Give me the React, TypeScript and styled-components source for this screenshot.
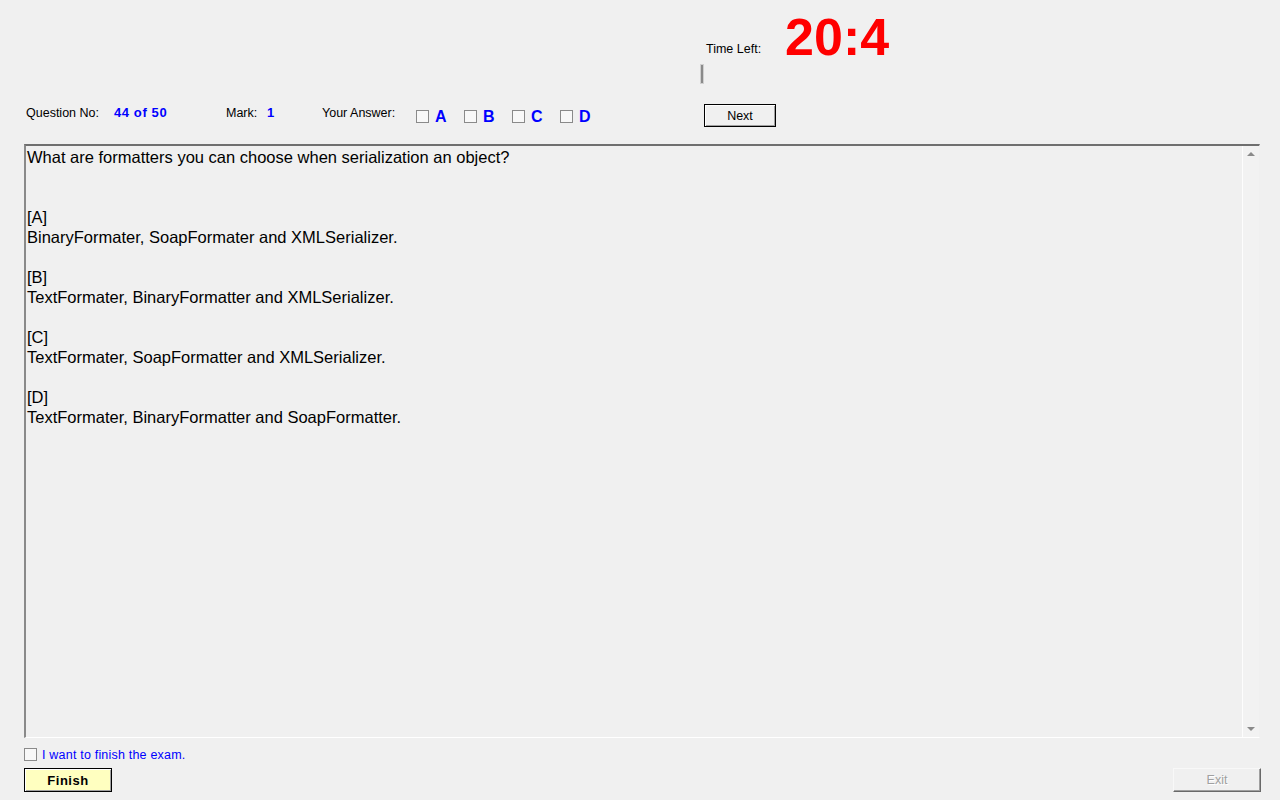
import styled, { createGlobalStyle } from 'styled-components'

const GlobalStyle = createGlobalStyle`
  html, body {
    margin: 0;
    padding: 0;
    background: #f0f0f0;
  }
  body {
    font-family: 'Liberation Sans', Arial, sans-serif;
    font-size: 12px;
    color: #000;
  }
`

const Page = styled.div`
  width: 1280px;
  height: 800px;
  display: flex;
  flex-direction: column;
  background: #f0f0f0;
  overflow: hidden;
`

const TimerArea = styled.div`
  display: flex;
  flex-direction: column;
  padding-left: 700px;
`

const TimerRow = styled.div`
  display: flex;
  align-items: flex-start;
  height: 64px;
  padding-left: 6px;
`

const TimeLabel = styled.span`
  margin-top: 42px;
  font-size: 12.5px;
  line-height: 14px;
`

const Clock = styled.span`
  margin-top: 11px;
  margin-left: 24px;
  font-size: 52px;
  line-height: 52px;
  font-weight: bold;
  color: #ff0000;
`

const Progress = styled.div`
  width: 2px;
  height: 18px;
  border: 1px solid #d0d0d0;
  background: #8a8a8a;
`

const InfoRow = styled.div`
  display: flex;
  align-items: center;
  height: 23px;
  margin-top: 20px;
  padding-left: 26px;
`

const Cell = styled.div<{ $w: number }>`
  width: ${(p) => p.$w}px;
  flex: none;
  display: flex;
  align-items: center;
  padding-bottom: 6px;
`

const Label = styled.span`
  font-size: 12.5px;
  line-height: 14px;
`

const Value = styled.span`
  font-size: 13px;
  line-height: 14px;
  font-weight: bold;
  letter-spacing: 0.6px;
  color: #0000ff;
`

const Option = styled.label`
  width: 48px;
  flex: none;
  display: flex;
  align-items: center;
  gap: 6px;
  padding-top: 2px;
`

const Box = styled.span`
  width: 11px;
  height: 11px;
  flex: none;
  border: 1px solid #8a8a8a;
  background: #f8f8f8;
`

const Letter = styled.span`
  font-size: 16px;
  line-height: 18px;
  font-weight: bold;
  color: #0000ff;
`

const Button = styled.button<{ $bg?: string; $bold?: boolean; $disabled?: boolean }>`
  width: 88px;
  height: 24px;
  padding: 0;
  box-sizing: border-box;
  font-family: 'Liberation Sans', Arial, sans-serif;
  font-size: ${(p) => (p.$bold ? '13px' : '12.5px')};
  letter-spacing: ${(p) => (p.$bold ? '0.5px' : '0')};
  font-weight: ${(p) => (p.$bold ? 'bold' : 'normal')};
  color: ${(p) => (p.$disabled ? '#a0a0a0' : '#000')};
  background: ${(p) => p.$bg || '#f0f0f0'};
  border: 1px solid ${(p) => (p.$disabled ? '#f8f8f8' : '#000')};
  border-right-color: ${(p) => (p.$disabled ? '#696969' : '#000')};
  border-bottom-color: ${(p) => (p.$disabled ? '#696969' : '#000')};
  box-shadow: ${(p) =>
    p.$disabled
      ? 'inset -1px -1px 0 #a0a0a0'
      : 'inset 1px 1px 0 #fff, inset -1px -1px 0 #a0a0a0'};
  text-shadow: ${(p) => (p.$disabled ? '1px 1px 0 #fff' : 'none')};
`

const NextButton = styled(Button)`
  width: 72px;
  height: 23px;
  margin-left: 96px;
`

const AnswerBox = styled.div`
  display: flex;
  margin: 17px 0 0 24px;
  width: 1236px;
  height: 594px;
  box-sizing: border-box;
  border-style: solid;
  border-width: 2px 1px 1px 2px;
  border-color: #6f6f6f #f0f0f0 #fff #8a8a8a;
`

const Content = styled.div`
  flex: 1;
  padding: 1px 0 0 1px;
  font-size: 16.5px;
  line-height: 20px;
  white-space: pre-line;
`

const ScrollBar = styled.div`
  width: 16px;
  display: flex;
  flex-direction: column;
  justify-content: space-between;
  align-items: center;
  border-left: 1px solid #fdfdfd;
  background: #f2f2f2;
  padding: 6px 0;
`

const Arrow = styled.svg`
  display: block;
`

const FinishCheck = styled.label`
  display: flex;
  align-items: center;
  gap: 5px;
  margin: 10px 0 0 24px;
  height: 13px;
`

const BlueText = styled.span`
  font-size: 12.5px;
  line-height: 14px;
  letter-spacing: 0.2px;
  color: #0000ff;
`

const Footer = styled.div`
  display: flex;
  justify-content: space-between;
  margin-top: 7px;
  padding: 0 19px 0 24px;
`

const question = `What are formatters you can choose when serialization an object?


[A]
BinaryFormater, SoapFormater and XMLSerializer.

[B]
TextFormater, BinaryFormatter and XMLSerializer.

[C]
TextFormater, SoapFormatter and XMLSerializer.

[D]
TextFormater, BinaryFormatter and SoapFormatter.`

const App = (): JSX.Element => {
  const options = ['A', 'B', 'C', 'D']
  return (
    <Page>
      <GlobalStyle />
      <TimerArea>
        <TimerRow>
          <TimeLabel>Time Left:</TimeLabel>
          <Clock>20:4</Clock>
        </TimerRow>
        <Progress />
      </TimerArea>

      <InfoRow>
        <Cell $w={88}>
          <Label>Question No:</Label>
        </Cell>
        <Cell $w={112}>
          <Value>44 of 50</Value>
        </Cell>
        <Cell $w={41}>
          <Label>Mark:</Label>
        </Cell>
        <Cell $w={55}>
          <Value>1</Value>
        </Cell>
        <Cell $w={94}>
          <Label>Your Answer:</Label>
        </Cell>
        {options.map((o) => (
          <Option key={o}>
            <Box />
            <Letter>{o}</Letter>
          </Option>
        ))}
        <NextButton>Next</NextButton>
      </InfoRow>

      <AnswerBox>
        <Content>{question}</Content>
        <ScrollBar>
          <Arrow width="8" height="4" viewBox="0 0 8 4">
            <path d="M4 0 L8 4 L0 4 Z" fill="#8a8a8a" />
          </Arrow>
          <Arrow width="8" height="4" viewBox="0 0 8 4">
            <path d="M0 0 L8 0 L4 4 Z" fill="#8a8a8a" />
          </Arrow>
        </ScrollBar>
      </AnswerBox>

      <FinishCheck>
        <Box />
        <BlueText>I want to finish the exam.</BlueText>
      </FinishCheck>

      <Footer>
        <Button $bg="#ffffc0" $bold>
          Finish
        </Button>
        <Button $disabled>Exit</Button>
      </Footer>
    </Page>
  )
}

export default App
